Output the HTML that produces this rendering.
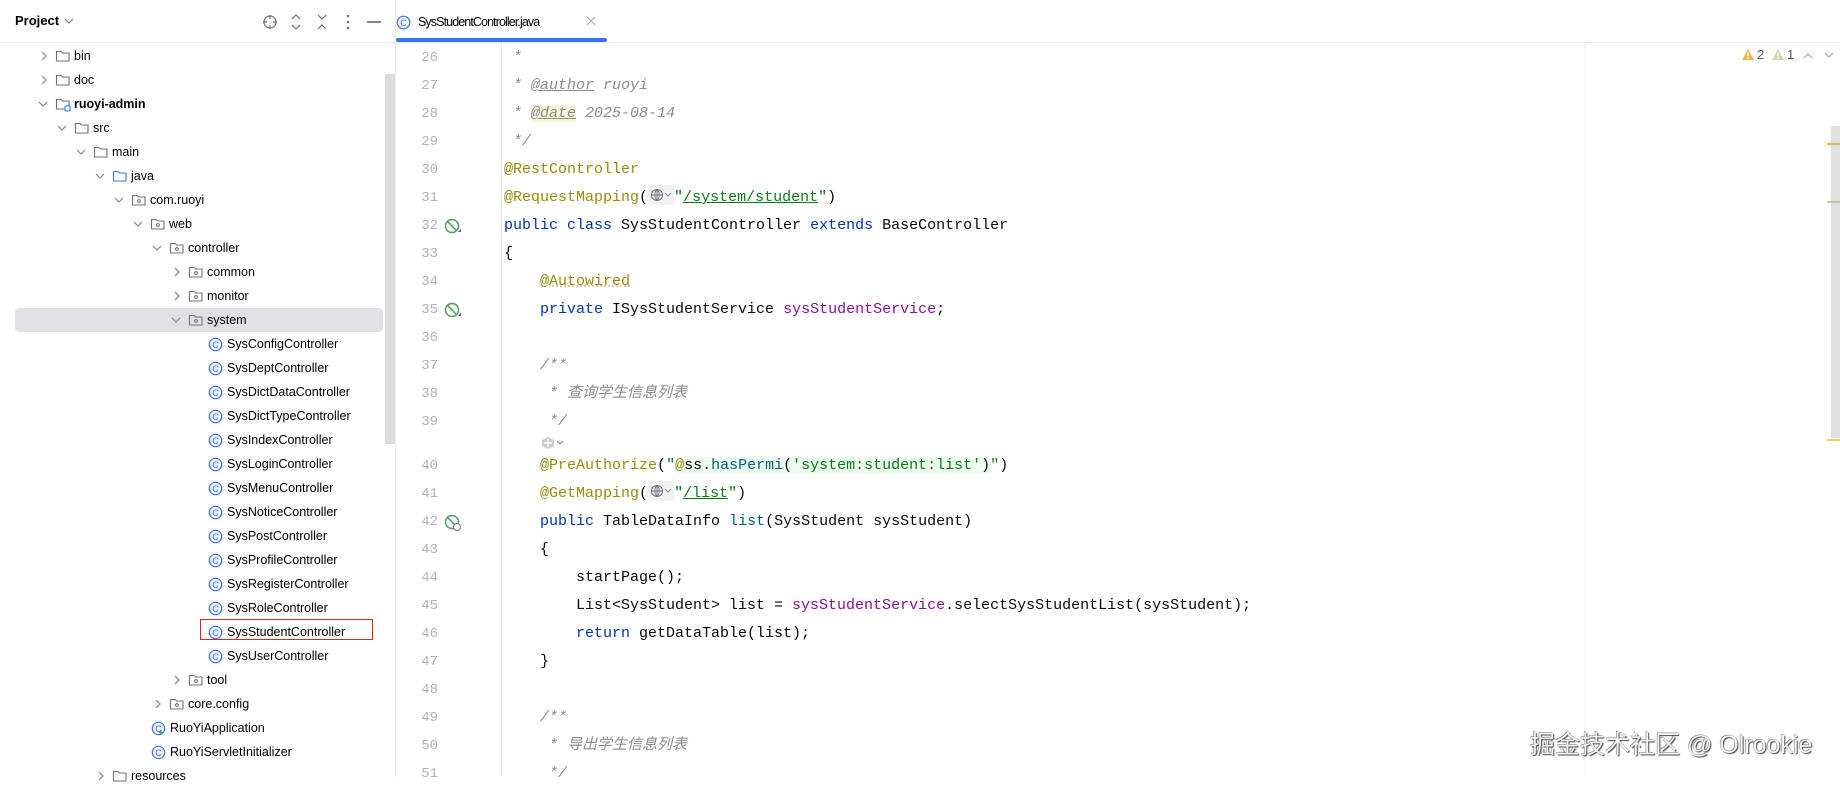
<!DOCTYPE html>
<html><head><meta charset="utf-8">
<style>
*{margin:0;padding:0;box-sizing:border-box}
body{width:1840px;height:777px;background:#fff;overflow:hidden;position:relative;font-family:"Liberation Sans","Noto Sans CJK SC",sans-serif;color:#000}
.abs{position:absolute}
#left{left:0;top:0;width:396px;height:777px;background:#fff;border-right:1px solid #ebecf0}
.row{position:absolute;height:24px;line-height:24px;font-size:12.5px;color:#000;white-space:nowrap}
.row svg{position:absolute;top:0}
.ln{position:absolute;left:396px;width:42px;text-align:right;font-family:"Liberation Mono",monospace;font-size:14px;color:#aeb3c2;height:28px;line-height:28px}
.cl{position:absolute;left:504px;height:28px;line-height:28px;font-family:"Liberation Mono","Noto Sans CJK SC",monospace;font-size:15px;white-space:pre;color:#080808}
.k{color:#0033b3}.a{color:#9e880d}.s{color:#067d17}.f{color:#871094}.c{color:#8c8c8c;font-style:italic}.m{color:#00627a}
.tag{text-decoration:underline;text-decoration-color:#8c8c8c}
.inl{display:inline-block;width:26px;height:20px;vertical-align:-4px;background:#f2f2f2;border-radius:3px;position:relative}
</style></head><body>
<div id="left" class="abs">
 <div class="abs" style="left:15px;top:13px;font-size:13px;font-weight:bold">Project</div>
 <svg class="abs" style="left:64px;top:17px" width="10" height="8"><path d="M1 2 L5 6 L9 2" fill="none" stroke="#818594" stroke-width="1.2"/></svg>
 <svg class="abs" style="left:262px;top:14px" width="16" height="16"><circle cx="8" cy="8" r="6" fill="none" stroke="#6c707e" stroke-width="1.2"/><path d="M8 1v4M8 11v4M1 8h4M11 8h4" stroke="#6c707e" stroke-width="1.2"/></svg>
 <svg class="abs" style="left:290px;top:13px" width="12" height="18"><path d="M2 6 L6 2 L10 6 M2 12 L6 16 L10 12" fill="none" stroke="#6c707e" stroke-width="1.2"/></svg>
 <svg class="abs" style="left:316px;top:13px" width="12" height="18"><path d="M2 2 L6 6 L10 2 M2 16 L6 12 L10 16" fill="none" stroke="#6c707e" stroke-width="1.2"/></svg>
 <svg class="abs" style="left:346px;top:14px" width="4" height="16"><circle cx="2" cy="2" r="1.3" fill="#6c707e"/><circle cx="2" cy="8" r="1.3" fill="#6c707e"/><circle cx="2" cy="14" r="1.3" fill="#6c707e"/></svg>
 <div class="abs" style="left:367px;top:21px;width:14px;height:1.5px;background:#818594"></div>
 <div class="abs" style="left:0;top:42px;width:395px;height:1px;background:#ebecf0"></div>
 <div class="abs" style="left:15px;top:308px;width:368px;height:24px;background:#dfe1e5;border-radius:4px"></div>
 <div class="abs" style="left:385px;top:74px;width:10px;height:370px;background:#dcdcdc"></div>
 <div id="tree"></div>
 <div class="abs" style="left:200px;top:619px;width:173px;height:21px;border:1.5px solid #e0261c"></div>
</div>

<div class="abs" style="left:396px;top:42px;width:1444px;height:1px;background:#ebecf0"></div>
<svg class="abs" style="left:396px;top:15px" width="15" height="15"><circle cx="7.5" cy="7.5" r="6.3" fill="#eef3ff" stroke="#3574f0" stroke-width="1.2"/><text x="7.5" y="11" font-size="9" text-anchor="middle" fill="#3574f0" font-family="Liberation Sans">C</text></svg>
<div class="abs" style="left:418px;top:15px;font-size:12.5px;letter-spacing:-0.9px;color:#000">SysStudentController.java</div>
<svg class="abs" style="left:586px;top:16px" width="10" height="10"><path d="M1 1L9 9M9 1L1 9" stroke="#a0a3ad" stroke-width="1"/></svg>
<div class="abs" style="left:396px;top:38px;width:211px;height:4px;background:#3574f0;border-radius:2px"></div>
<div class="abs" style="left:501px;top:43px;width:1px;height:734px;background:#ebecf0"></div>
<div class="abs" style="left:1584px;top:43px;width:1px;height:734px;background:#f4f4f4"></div>

<svg class="abs" style="left:1741px;top:48px" width="14" height="13"><path d="M7 1L13 12H1Z" fill="#f2b54b"/><rect x="6.3" y="4.5" width="1.4" height="4" fill="#fff"/><rect x="6.3" y="9.4" width="1.4" height="1.4" fill="#fff"/></svg>
<div class="abs" style="left:1757px;top:47px;font-size:13px;color:#555">2</div>
<svg class="abs" style="left:1771px;top:48px" width="14" height="13"><path d="M7 1L13 12H1Z" fill="#d4d2b0"/><rect x="6.3" y="4.5" width="1.4" height="4" fill="#fff"/><rect x="6.3" y="9.4" width="1.4" height="1.4" fill="#fff"/></svg>
<div class="abs" style="left:1787px;top:47px;font-size:13px;color:#555">1</div>
<svg class="abs" style="left:1803px;top:52px" width="10" height="7"><path d="M1 6L5 2L9 6" fill="none" stroke="#9a9da6" stroke-width="1.1"/></svg>
<svg class="abs" style="left:1824px;top:52px" width="10" height="7"><path d="M1 1L5 5L9 1" fill="none" stroke="#9a9da6" stroke-width="1.1"/></svg>

<div class="abs" style="left:1831px;top:126px;width:9px;height:312px;background:#e0e0e0"></div>
<div class="abs" style="left:1827px;top:143px;width:13px;height:2px;background:#e3b14a"></div>
<div class="abs" style="left:1827px;top:201px;width:13px;height:2px;background:#c3c3a8"></div>
<div class="abs" style="left:1827px;top:439px;width:13px;height:2px;background:#ecd24a"></div>

<div id="code"></div>

<div class="abs" style="left:1530px;top:725px;font-size:25px;color:#f4f4f4;text-shadow:1px 1px 1px #444,-0.5px -0.5px 0.5px #666;font-family:'Liberation Sans','Noto Sans CJK SC',sans-serif;white-space:nowrap">掘金技术社区 @ Olrookie</div>

<script>
(function(){
var T=document.getElementById('tree');var h='';
var chevR='<path d="M2 2L6 6L2 10" fill="none" stroke="#818594" stroke-width="1.2"/>';
var chevD='<path d="M1 4L5 8L9 4" fill="none" stroke="#818594" stroke-width="1.2"/>';
function folder(col,kind){var s='<path d="M1.5 3.5h4.5l1.5 1.5h6.5v8h-12.5z" fill="none" stroke="'+col+'" stroke-width="1.1"/>';
 if(kind=='p')s+='<circle cx="8" cy="9" r="1.4" fill="none" stroke="'+col+'" stroke-width="1"/>';
 if(kind=='m')s+='<rect x="10" y="10" width="5" height="5" rx="1.2" fill="#fff" stroke="#3574f0" stroke-width="1.1"/>';
 return s;}
var items=[
['bin',0,'c','f'],['doc',0,'c','f'],['ruoyi-admin',0,'o','m'],['src',1,'o','f'],['main',2,'o','f'],['java',3,'o','j'],
['com.ruoyi',4,'o','p'],['web',5,'o','p'],['controller',6,'o','p'],['common',7,'c','p'],['monitor',7,'c','p'],['system',7,'o','p']];
['SysConfigController','SysDeptController','SysDictDataController','SysDictTypeController','SysIndexController','SysLoginController','SysMenuController','SysNoticeController','SysPostController','SysProfileController','SysRegisterController','SysRoleController','SysStudentController','SysUserController'].forEach(function(n){items.push([n,8,'l','c'])});
items.push(['tool',7,'c','p'],['core.config',6,'c','p'],['RuoYiApplication',5,'l','a'],['RuoYiServletInitializer',5,'l','c'],['resources',3,'c','f']);
items.forEach(function(it,i){var top=44+24*i,cx=42+19*it[1];
 var r='<div class="row" style="left:0;top:'+top+'px;width:385px">';
 if(it[2]=='c')r+='<svg style="left:'+(cx-2)+'px;top:6px" width="10" height="12">'+chevR+'</svg>';
 if(it[2]=='o')r+='<svg style="left:'+(cx-4)+'px;top:6px" width="10" height="12">'+chevD+'</svg>';
 if(it[3]=='c'||it[3]=='a'){r+='<svg style="left:'+(cx+14)+'px;top:5px" width="15" height="15"><circle cx="7.5" cy="7.5" r="6.2" fill="#eef3ff" stroke="#3574f0" stroke-width="1.2"/><text x="7.5" y="11" font-size="9" text-anchor="middle" fill="#3574f0" font-family="Liberation Sans">C</text>'+(it[3]=='a'?'<path d="M10 9v5M8 11.5h4" stroke="#4c9b5f" stroke-width="1.3"/>':'')+'</svg>';
 r+='<span style="position:absolute;left:'+(cx+33)+'px">'+it[0]+'</span>';}
 else{var col=it[3]=='j'?'#3574f0':'#6c707e';
 r+='<svg style="left:'+(cx+13)+'px;top:4px" width="16" height="16">'+folder(col,it[3])+'</svg>';
 r+='<span style="position:absolute;left:'+(cx+32)+'px;'+(it[3]=='m'?'font-weight:bold':'')+'">'+it[0]+'</span>';}
 h+=r+'</div>';});
T.innerHTML=h;

var C=document.getElementById('code');var g='';
var inl='<span class="inl"><svg style="position:absolute;left:2px;top:3px" width="24" height="14"><circle cx="7" cy="7" r="5.5" fill="none" stroke="#6c707e" stroke-width="1"/><path d="M1.5 7h11M7 1.5v11M7 1.5c-3 3-3 8 0 11M7 1.5c3 3 3 8 0 11" fill="none" stroke="#6c707e" stroke-width="0.9"/><path d="M15 5l3 3l3-3" fill="none" stroke="#818594" stroke-width="1"/></svg></span>';
var L=[
[26,'<span class="c"> *</span>'],
[27,'<span class="c"> * <span class="tag">@author</span> ruoyi</span>'],
[28,'<span class="c"> * <span class="tag" style="background:#faf3d9">@date</span> 2025-08-14</span>'],
[29,'<span class="c"> */</span>'],
[30,'<span class="a">@RestController</span>'],
[31,'<span class="a">@RequestMapping</span>('+inl+'<span class="s">"<span style="text-decoration:underline">/system/student</span>"</span>)'],
[32,'<span class="k">public class</span> SysStudentController <span class="k">extends</span> BaseController'],
[33,'{'],
[34,'    <span class="a" style="text-decoration:underline dotted #c8c0a0">@Autowired</span>'],
[35,'    <span class="k">private</span> ISysStudentService <span class="f">sysStudentService</span>;'],
[36,''],
[37,'    <span class="c">/**</span>'],
[38,'    <span class="c"> * 查询学生信息列表</span>'],
[39,'    <span class="c"> */</span>'],
[40,'    <span class="a">@PreAuthorize</span>(<span class="s">"</span><span style="background:#edfcee"><span class="a">@</span>ss.<span class="m">hasPermi</span>(<span class="s">\'system:student:list\'</span>)</span><span class="s">"</span>)'],
[41,'    <span class="a">@GetMapping</span>('+inl+'<span class="s">"<span style="text-decoration:underline">/list</span>"</span>)'],
[42,'    <span class="k">public</span> TableDataInfo <span class="m">list</span>(SysStudent sysStudent)'],
[43,'    {'],
[44,'        startPage();'],
[45,'        List&lt;SysStudent&gt; list = <span class="f">sysStudentService</span>.selectSysStudentList(sysStudent);'],
[46,'        <span class="k">return</span> getDataTable(list);'],
[47,'    }'],
[48,''],
[49,'    <span class="c">/**</span>'],
[50,'    <span class="c"> * 导出学生信息列表</span>'],
[51,'    <span class="c"> */</span>']];
L.forEach(function(l){var n=l[0];var top=44+(n-26)*28+(n>=40?16:0);
 g+='<div class="ln" style="top:'+top+'px">'+n+'</div><div class="cl" style="top:'+top+'px">'+l[1]+'</div>';
 if(n==32||n==35||n==42){g+='<svg class="abs" style="left:444px;top:'+(top+6)+'px" width="18" height="18"><circle cx="8" cy="8" r="6.5" fill="#f0f8f1" stroke="#4c9b5f" stroke-width="1.4"/><path d="M3.5 3.5L12.5 12.5" stroke="#4c9b5f" stroke-width="1.4"/>'+(n==42?'<circle cx="13" cy="13" r="3.5" fill="#fff" stroke="#6c707e" stroke-width="1"/>':'<path d="M14 14l3 0l0-3z" fill="#555"/>')+'</svg>';}
});
g+='<svg class="abs" style="left:540px;top:435px" width="24" height="16"><path d="M2 5l6-3l6 3v6l-6 3l-6-3z" fill="#c9ccd3"/><path d="M4 8h8M8 4v8" stroke="#fff" stroke-width="1.4"/><path d="M17 6l3 3l3-3" fill="none" stroke="#818594" stroke-width="1"/></svg>';
C.innerHTML=g;
})();
</script>
</body></html>
